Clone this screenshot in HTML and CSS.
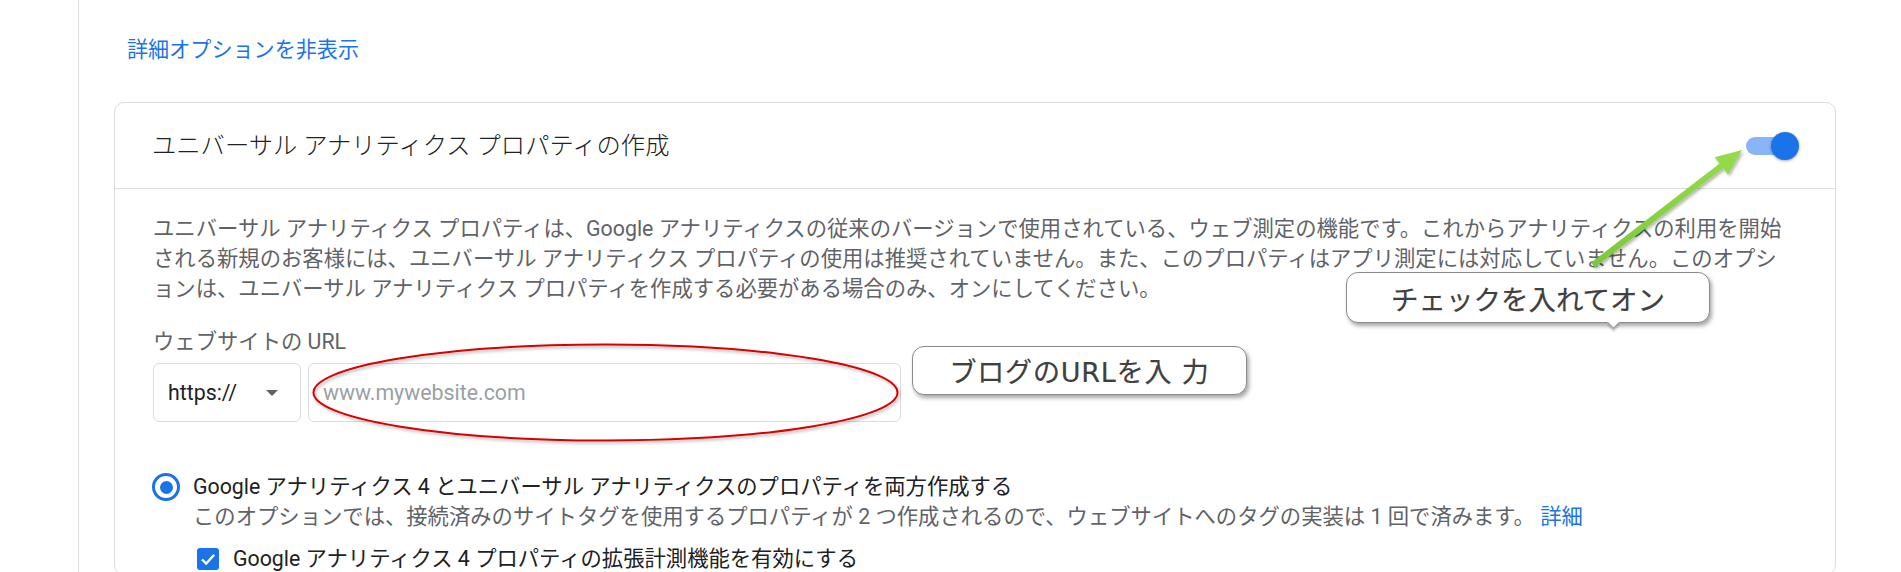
FILE: index.html
```html
<!DOCTYPE html>
<html lang="ja">
<head>
<meta charset="utf-8">
<title>ユニバーサル アナリティクス プロパティの作成</title>
<link rel="stylesheet" href="styles.css">
</head>
<body>
<div class="page">
  <div class="adv"><a class="adv-link" href="#">詳細オプションを非表示</a></div>
  <section class="card">
    <header class="card-head">
      <h2 class="card-title">ユニバーサル アナリティクス プロパティの作成</h2>
      <span class="toggle"><span class="toggle-track"></span><span class="toggle-knob"></span></span>
    </header>
    <div class="card-body">
      <p class="desc">ユニバーサル アナリティクス プロパティは、Google アナリティクスの従来のバージョンで使用されている、ウェブ測定の機能です。これからアナリティクスの利用を開始<br>される新規のお客様には、ユニバーサル アナリティクス プロパティの使用は推奨されていません。また、このプロパティはアプリ測定には対応していません。このオプシ<br>ョンは、ユニバーサル アナリティクス プロパティを作成する必要がある場合のみ、オンにしてください。</p>
      <div class="field-label">ウェブサイトの URL</div>
      <div class="field-row">
        <div class="select"><span>https://</span><span class="caret"></span></div>
        <div class="url-input">www.mywebsite.com</div>
      </div>
      <div class="option">
        <span class="radio"><span class="radio-dot"></span></span>
        <div class="option-text">
          <div class="option-label">Google アナリティクス 4 とユニバーサル アナリティクスのプロパティを両方作成する</div>
          <div class="option-sub">このオプションでは、接続済みのサイトタグを使用するプロパティが 2 つ作成されるので、ウェブサイトへのタグの実装は 1 回で済みます。 <a class="more" href="#">詳細</a></div>
        </div>
      </div>
      <div class="check-row">
        <span class="checkbox"><svg viewBox="0 0 22 22" width="22" height="22"><path d="M5 11.5 L9.2 15.6 L17.2 6.8" fill="none" stroke="#fff" stroke-width="2.4"/></svg></span>
        <span class="check-label">Google アナリティクス 4 プロパティの拡張計測機能を有効にする</span>
      </div>
    </div>
  </section>
</div>

<svg class="overlay" width="1901" height="572" viewBox="0 0 1901 572">
  <defs>
    <filter id="sh" x="-10%" y="-30%" width="120%" height="160%">
      <feDropShadow dx="1.5" dy="2" stdDeviation="1.6" flood-color="#000" flood-opacity="0.3"/>
    </filter>
    <linearGradient id="gr" x1="0" y1="1" x2="1" y2="0">
      <stop offset="0" stop-color="#7cc83a"/>
      <stop offset="1" stop-color="#95dc4c"/>
    </linearGradient>
  </defs>
  <ellipse cx="605.5" cy="392.5" rx="292" ry="48" fill="none" stroke="#d90000" stroke-width="2" filter="url(#sh)"/>
  <polygon points="1591.2,262.6 1719.6,163.5 1714.7,157.2 1742,150 1728.1,174.6 1723.2,168.3 1594.8,267.4" fill="url(#gr)" filter="url(#sh)"/>
</svg>

<div class="callout callout-on">チェックを入れてオン</div>
<div class="callout callout-url">ブログのURLを入 力</div>
</body>
</html>
```

FILE: styles.css
```css
* { box-sizing: border-box; }
html, body { margin: 0; padding: 0; background: #fff; }
body {
  position: relative;
  width: 1901px;
  height: 572px;
  overflow: hidden;
  font-family: Roboto, "Noto Sans CJK JP", sans-serif;
  font-size: 21.33px;
  color: #202124;
}
.page {
  margin-left: 78px;
  border-left: 1px solid #dadce0;
  min-height: 572px;
  padding-left: 35px;
  padding-top: 35px;
}
.adv { height: 30px; line-height: 30px; padding-left: 13px; }
.adv-link { color: #1a73e8; text-decoration: none; font-size: 21.1px; }

.card {
  margin-top: 37px;
  width: 1722px;
  border: 1px solid #dadce0;
  border-radius: 10px;
}
.card-head {
  height: 86px;
  border-bottom: 1px solid #dadce0;
  display: flex;
  align-items: center;
  justify-content: space-between;
  padding: 0 36px 0 37px;
}
.card-title { margin: 0; font-size: 24.3px; font-weight: 300; color: #202124; line-height: 30px; }
.toggle { position: relative; width: 53px; height: 28px; display: block; }
.toggle-track {
  position: absolute; left: 0; top: 5px;
  width: 46px; height: 18px; border-radius: 9px;
  background: #8ab4f8;
}
.toggle-knob {
  position: absolute; right: 0; top: 0;
  width: 28px; height: 28px; border-radius: 50%;
  background: #1a73e8;
  box-shadow: 0 1px 3px rgba(0,0,0,0.35);
}

.card-body { padding: 25px 37px 0 38px; }
.desc { margin: 0; line-height: 30px; color: #5f6368; white-space: nowrap; }
.field-label { margin-top: 23px; line-height: 30px; color: #5f6368; }
.field-row { margin-top: 6px; display: flex; gap: 7px; }
.select {
  width: 148px; height: 59px;
  border: 1px solid #dadce0; border-radius: 6px;
  display: flex; align-items: center; justify-content: space-between;
  padding: 0 22px 0 14px;
  color: #202124;
}
.caret {
  width: 0; height: 0;
  border-left: 6px solid transparent;
  border-right: 6px solid transparent;
  border-top: 6px solid #5f6368;
}
.url-input {
  width: 593px; height: 59px;
  border: 1px solid #dadce0; border-radius: 6px;
  display: flex; align-items: center;
  padding-left: 14px;
  color: #9aa0a6;
}

.option { margin-top: 50px; display: flex; gap: 13px; margin-left: -1px; }
.radio {
  flex: none;
  margin-top: 1px;
  width: 28px; height: 28px; border-radius: 50%;
  border: 3.5px solid #1a73e8;
  display: flex; align-items: center; justify-content: center;
}
.radio-dot { width: 13px; height: 13px; border-radius: 50%; background: #1a73e8; }
.option-label { line-height: 30px; color: #202124; }
.option-sub { line-height: 30px; color: #5f6368; }
.more { color: #1a73e8; text-decoration: none; }

.check-row { margin-top: 12px; margin-left: 44px; display: flex; align-items: center; gap: 14px; line-height: 30px; }
.checkbox {
  flex: none; width: 22px; height: 22px; border-radius: 3px;
  background: #1a73e8; display: block;
}
.checkbox svg { display: block; }
.check-label { color: #202124; }

.overlay { position: absolute; left: 0; top: 0; pointer-events: none; }

.callout {
  position: absolute;
  background: #fff;
  border: 1px solid #8a8a8a;
  border-radius: 12px;
  box-shadow: 2px 3px 4px rgba(0,0,0,0.35);
  font-family: "DejaVu Sans", "Noto Sans CJK JP", sans-serif;
  font-weight: 400;
  -webkit-text-stroke: 0.2px #404040;
  color: #404040;
  display: flex; align-items: center; justify-content: center;
  white-space: nowrap;
}
.callout-on {
  left: 1346px; top: 272px; width: 364px; height: 51px;
  font-size: 27.5px;
}
.callout-on::after {
  content: "";
  position: absolute;
  left: 262px; bottom: -5px;
  width: 8px; height: 8px;
  background: #fff;
  border-right: 1px solid #8a8a8a;
  border-bottom: 1px solid #8a8a8a;
  transform: rotate(45deg);
  box-shadow: 2px 2px 2px rgba(0,0,0,0.2);
}
.callout-url {
  left: 912px; top: 346px; width: 335px; height: 49px;
  font-size: 27px;
  letter-spacing: 0.8px;
}
```
